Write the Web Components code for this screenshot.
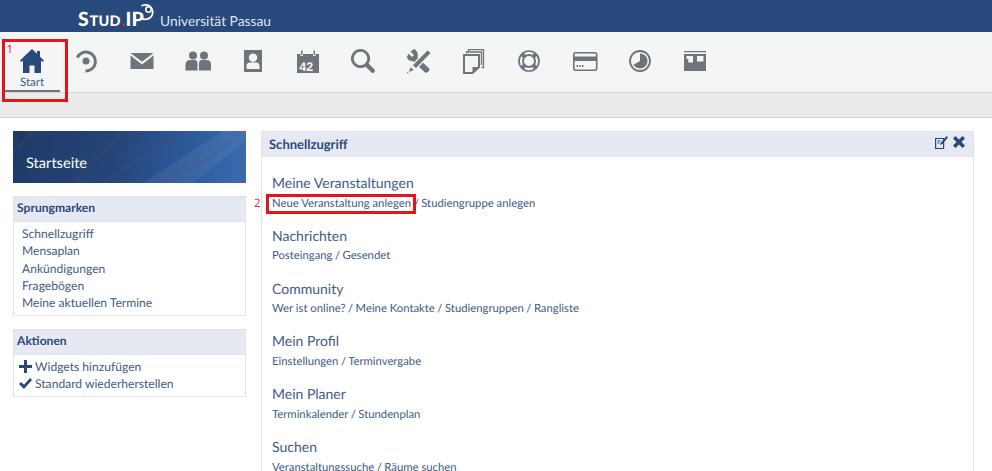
<!DOCTYPE html>
<html lang="de">
<head>
<meta charset="utf-8">
<title>Stud.IP</title>
<style>
html,body{margin:0;height:471px;overflow:hidden;background:#fff;font-family:Lato,"Liberation Sans",sans-serif;text-rendering:geometricPrecision}
</style>
</head>
<body>
<studip-page>
  <top-bar slot="top"></top-bar>
  <main-nav slot="top"></main-nav>
  <div slot="top" style="height:24px;background:#ebebeb;border-bottom:1px solid #d4d4d4"></div>

  <side-bar slot="side">
    <side-box title="Sprungmarken">
      <a>Schnellzugriff</a><a>Mensaplan</a><a>Ankündigungen</a><a>Fragebögen</a><a>Meine aktuellen Termine</a>
    </side-box>
    <side-box title="Aktionen" actions>
      <a><svg width="13" height="13" viewBox="0 0 13 13" style="margin:0 3px 0 0;vertical-align:-2px"><path fill="#28497c" d="M5 0h3v5h5v3H8v5H5V8H0V5h5z"/></svg>Widgets hinzufügen</a>
      <a><svg width="13" height="11" viewBox="0 0 13 11" style="margin:0 3px 0 0;vertical-align:-1px"><path fill="#28497c" d="M0 6l2-2 3 2.800 6-6.800 2 2-8 9z"/></svg>Standard wiederherstellen</a>
    </side-box>
  </side-bar>

  <quick-panel slot="main" title="Schnellzugriff">
    <link-group title="Meine Veranstaltungen"><a>Neue Veranstaltung anlegen</a> <i>/</i> <a>Studiengruppe anlegen</a></link-group>
    <link-group title="Nachrichten"><a>Posteingang</a> <i>/</i> <a>Gesendet</a></link-group>
    <link-group title="Community"><a>Wer ist online?</a> <i>/</i> <a>Meine Kontakte</a> <i>/</i> <a>Studiengruppen</a> <i>/</i> <a>Rangliste</a></link-group>
    <link-group title="Mein Profil"><a>Einstellungen</a> <i>/</i> <a>Terminvergabe</a></link-group>
    <link-group title="Mein Planer"><a>Terminkalender</a> <i>/</i> <a>Stundenplan</a></link-group>
    <link-group title="Suchen"><a>Veranstaltungssuche</a> <i>/</i> <a>Räume suchen</a></link-group>
  </quick-panel>

  <red-mark slot="over" n="1" style="left:2px;top:39px;width:60px;height:57px"></red-mark>
  <red-mark slot="over" n="2" style="left:266px;top:194px;width:144px;height:14px" side></red-mark>
</studip-page>

<script>
const GREY = "#6e7479";
const ICONS = {
  home: `<path fill="#28497c" d="M12 0 0 11.500l1.300 1.500L3 11.600V24h6.500v-7.500h5V24H21V11.600l1.700 1.400L24 11.500 20 7.700V2h-3v2.800z"/>`,
  ring: `<path fill="none" stroke="${GREY}" stroke-width="3" d="M2.300 8.500A9.500 9.500 0 1 1 10.500 22"/><circle cx="11" cy="12" r="3.500" fill="${GREY}"/>`,
  mail: `<path fill="${GREY}" d="M.5 4h23L12 12.800zM.5 6.600 12 15.500l11.500-8.900V20H.5z"/>`,
  people: `<g fill="${GREY}"><circle cx="7" cy="6.500" r="4"/><circle cx="18" cy="6.500" r="4"/><path d="M-.5 21.500v-6c0-3 2-4.500 4-4.500h5.500c1.500 0 2.500 1.500 2.500 3.200v7.300zM13 21.500v-7.300c0-1.700 1-3.200 2.500-3.200H21c2.500 0 4 1.500 4 4.500v6z"/></g>`,
  profile: `<path fill="${GREY}" fill-rule="evenodd" d="M3 1h18v22H3zM12 4.500a4.200 4.200 0 1 0 .01 0zM5.500 20h13v-3.500c0-1.800-1.800-3-3.500-3H9c-1.700 0-3.500 1.200-3.500 3z"/>`,
  search: `<path fill="none" stroke="${GREY}" stroke-width="2.800" d="M9.500 1.400a8.100 8.100 0 1 0 .01 0z"/><path stroke="${GREY}" stroke-width="4.400" stroke-linecap="round" d="M16 16l5.800 5.800"/>`,
  tools: `<g fill="${GREY}"><path d="M7 0 3.500 2.700 7 6 5 8 1.500 4.800 0 7.500c0 3 3 5 5.500 4.200l12.300 11.600c1.400 1.300 4.600-.5 4.700-3.600L10.500 8.500C11.500 5 10 1 7 0z"/><path d="M20.500 .5l4 3.500L9 20l-4-3.700z" stroke="#f4f6f6" stroke-width="1.300"/><path d="M3.600 18.200 6.800 21l-5 2z"/><circle cx=".8" cy="23.700" r=".7"/></g>`,
  files: `<path fill="none" stroke="${GREY}" stroke-width="1.300" d="M6.500 2.500V.7h15v17.800h-1.800M4.500 4.600V3H19.500v13"/><path fill="none" stroke="${GREY}" stroke-width="2" d="M2 24V6h15v12l-6.500 6z"/><path fill="${GREY}" d="M10.500 24v-6H17z"/>`,
  help: `<g fill="none" stroke="${GREY}"><circle cx="12" cy="12" r="10" stroke-width="1.700"/><circle cx="12" cy="12" r="6" stroke-width="2"/><path stroke-width="4" d="M7.500 7.500 5 5M16.500 7.500 19 5M7.500 16.500 5 19M16.500 16.500 19 19"/></g>`,
  card: `<rect x=".8" y="3.800" width="22.900" height="17.400" rx="2" fill="none" stroke="${GREY}" stroke-width="1.600"/><path fill="${GREY}" d="M1 7.500h22.500V12H1zM3.500 16h1.500v2H3.500zM6.300 16h1.500v2H6.300zM9 16h1.500v2H9z"/>`,
  chart: `<circle cx="12" cy="12" r="10" fill="none" stroke="${GREY}" stroke-width="1.800"/><path fill="${GREY}" d="M12 4.500a7.500 7.500 0 1 1-6.500 11.200L12 12z"/>`,
  board: `<path fill="${GREY}" fill-rule="evenodd" d="M1 2h22v1.300H1zM1 5h22v17H1zM3.500 7v3h1.800v3.500h4.700V7zM14 7v5.500h6.500V7z"/>`,
  cal: `<path fill="${GREY}" d="M1 5h3.500v2h2.500V5h10v2h2.500V5H23v19H1z"/><path fill="none" stroke="${GREY}" stroke-width="1.400" d="M5.800 6V1.500M18.300 6V1.500"/><text x="3.200" y="21.500">42</text>`
};

customElements.define("studip-page", class extends HTMLElement {
  connectedCallback() {
    this.attachShadow({ mode: "open" }).innerHTML = `<style>
      :host{display:block;position:relative;width:992px;height:471px;overflow:hidden}
      .body{display:flex;gap:15px;padding:13px 18px 0 13px}
      .side{flex:0 0 233px}.main{flex:1;min-width:0}
    </style>
    <slot name="top"></slot>
    <div class="body"><div class="side"><slot name="side"></slot></div><div class="main"><slot name="main"></slot></div></div>
    <slot name="over"></slot>`;
  }
});

customElements.define("top-bar", class extends HTMLElement {
  connectedCallback() {
    this.attachShadow({ mode: "open" }).innerHTML = `<style>
      :host{display:block;height:32px;background:#28497c;color:#fff;overflow:hidden}
      .in{display:flex;align-items:baseline;height:32px;padding:9px 0 0 78px;box-sizing:border-box}
      .logo{position:relative;flex:0 0 82px;font:900 19.500px/20px Lato,sans-serif;white-space:nowrap;letter-spacing:.25px}
      .logo small{font-size:14.500px;margin-left:.5px}
      .logo i{font-style:normal;color:#d0202a;font-size:18px}
      svg{position:absolute;left:60px;top:-9px}
      .uni{font:13.800px/20px Lato,sans-serif;color:#dfe5ee}
    </style>
    <div class="in">
      <span class="logo">S<small>TUD</small><i>.</i>IP<svg width="20" height="24" viewBox="0 0 20 24"><path fill="none" stroke="#fff" stroke-width="1.800" d="M3.500 6A7.300 7.300 0 1 1 2.500 17.500"/><circle cx="10.500" cy="9.500" r="2.700" fill="none" stroke="#fff" stroke-width="1.500"/></svg></span>
      <span class="uni">Universität Passau</span>
    </div>`;
  }
});

customElements.define("main-nav", class extends HTMLElement {
  connectedCallback() {
    const items = ["home","ring","mail","people","profile","cal","search","tools","files","help","card","chart","board"];
    this.attachShadow({ mode: "open" }).innerHTML = `<style>
      :host{display:block;height:60px;background:#f4f6f6;border-bottom:1px solid #d6d6d6}
      .row{display:flex;padding-left:4px}
      .it{flex:0 0 55.300px;height:60px;box-sizing:border-box;display:flex;flex-direction:column;align-items:center;padding-top:17px}
      .it.on{flex-basis:56px;margin-right:-.700px;border-bottom:2px solid ${GREY}}
      .it span{font:11.500px/1 Lato,sans-serif;color:#3c5a88;margin-top:4px}
      svg{display:block;overflow:visible}
      text{font:700 12.500px "Liberation Sans",sans-serif;fill:#f4f6f6}
    </style><div class="row">${items.map((k,i) => `<div class="it ${i?"":"on"}"><svg width="24" height="24" viewBox="0 0 24 24">${ICONS[k]}</svg>${i?"":"<span>Start</span>"}</div>`).join("")}</div>`;
  }
});

customElements.define("side-bar", class extends HTMLElement {
  connectedCallback() {
    this.attachShadow({ mode: "open" }).innerHTML = `<style>
      :host{display:block}
      .head{position:relative;height:52px;margin-bottom:13px;overflow:hidden;background:linear-gradient(100deg,#1e3a66 0%,#25467b 45%,#2f5ea2 80%,#3a6cae 100%)}
      .head svg{position:absolute;inset:0}
      .head span{position:absolute;left:13px;top:26px;font:14.600px/1 Lato,sans-serif;color:#fff}
    </style>
    <div class="head">
      <svg width="233" height="52" viewBox="0 0 233 52"><g fill="none" stroke="#7b3a5c" stroke-width=".8" opacity=".8"><path d="M0 22Q12 10 20 0M60 52Q85 25 110 0M92 52Q130 22 172 0M152 52Q195 30 229 1"/></g><g fill="#fff" opacity=".06"><path d="M130 52 210 0h23v10L180 52z"/></g></svg>
      <span>Startseite</span>
    </div><slot></slot>`;
  }
});

customElements.define("side-box", class extends HTMLElement {
  connectedCallback() {
    const actions = this.hasAttribute("actions");
    this.attachShadow({ mode: "open" }).innerHTML = `<style>
      :host{display:block;border:1px solid #dfe3ec;margin-bottom:13px;font:12.100px/17.300px Lato,sans-serif;color:#3f5b85}
      h2{margin:0;height:25px;box-sizing:border-box;background:#e6e9f1;font:700 12.100px/22px Lato,sans-serif;color:#28497c;padding-left:3px;border-bottom:1px solid #dfe3ec}
      .list{display:flex;flex-direction:column;padding:3px 0 3.500px ${actions?5:8}px}
      ::slotted(a){display:block}
    </style><h2>${this.getAttribute("title")}</h2><div class="list"><slot></slot></div>`;
  }
});

customElements.define("quick-panel", class extends HTMLElement {
  connectedCallback() {
    this.attachShadow({ mode: "open" }).innerHTML = `<style>
      :host{display:block;border:1px solid #dfe3ec;border-bottom:0}
      header{display:flex;justify-content:space-between;align-items:center;height:25px;box-sizing:border-box;background:#e6e9f1;padding:0 8px 0 7px;font:700 13px/25px Lato,sans-serif;color:#28497c}
      .tools{display:flex;gap:5px;align-items:center;margin-top:-5px}
      .list{padding:17px 10px 0}
    </style>
    <header><span>${this.getAttribute("title")}</span><span class="tools">
      <svg width="13" height="13" viewBox="0 0 13 13"><path fill="none" stroke="#28497c" stroke-width="1.200" d="M.6 2.500h8v10h-8zM2.500 5h3M2.500 7h2"/><path fill="#28497c" d="M11.500 0 13 1.500 7.500 8 5 9l1-2.500z"/></svg>
      <svg width="12" height="12" viewBox="0 0 12 12"><path fill="#28497c" d="M2.500 0 6 3.500 9.500 0 12 2.500 8.500 6 12 9.500 9.500 12 6 8.500 2.500 12 0 9.500 3.500 6 0 2.500z"/></svg>
    </span></header><div class="list"><slot></slot></div>`;
  }
});

customElements.define("link-group", class extends HTMLElement {
  connectedCallback() {
    this.attachShadow({ mode: "open" }).innerHTML = `<style>
      :host{display:block;height:52.800px;color:#3f5b85}
      h3{margin:0;font:400 14px/18px Lato,sans-serif;color:#3f5b85}
      div{font:11.300px/18px Lato,sans-serif;margin-top:2.600px}
      ::slotted(i){font-style:normal;margin:0 -.4px}
    </style><h3>${this.getAttribute("title")}</h3><div><slot></slot></div>`;
  }
});

customElements.define("red-mark", class extends HTMLElement {
  connectedCallback() {
    const side = this.hasAttribute("side");
    this.attachShadow({ mode: "open" }).innerHTML = `<style>
      :host{position:absolute;display:block;border:3px solid #e5141c}
      span{position:absolute;font:11.500px/1 "Noto Sans",sans-serif;color:#f0282e;${side?"left:-15px;top:1px":"left:1.500px;top:2px"}}
    </style><span>${this.getAttribute("n")}</span>`;
  }
});
</script>
</body>
</html>
